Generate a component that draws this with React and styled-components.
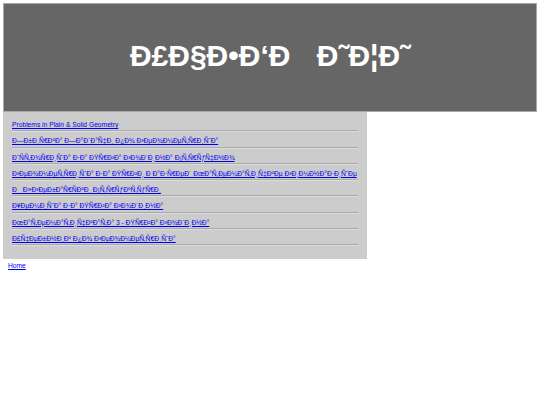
import React from "react";
import styled, { createGlobalStyle } from "styled-components";

const GlobalStyle = createGlobalStyle`
  html, body {
    margin: 0;
    padding: 0;
    background: #ffffff;
  }
  body {
    padding: 3px;
    font-family: "Liberation Sans", Arial, sans-serif;
  }
`;

// UTF-8 text shown as windows-1252, as the page in the picture does
const CP1252 = {
  0x80: 0x20ac, 0x82: 0x201a, 0x83: 0x0192, 0x84: 0x201e, 0x85: 0x2026,
  0x86: 0x2020, 0x87: 0x2021, 0x88: 0x02c6, 0x89: 0x2030, 0x8a: 0x0160,
  0x8b: 0x2039, 0x8c: 0x0152, 0x8e: 0x017d, 0x91: 0x2018, 0x92: 0x2019,
  0x93: 0x201c, 0x94: 0x201d, 0x95: 0x2022, 0x96: 0x2013, 0x97: 0x2014,
  0x98: 0x02dc, 0x99: 0x2122, 0x9a: 0x0161, 0x9b: 0x203a, 0x9c: 0x0153,
  0x9e: 0x017e, 0x9f: 0x0178,
};
const garble = (s) =>
  Array.from(new TextEncoder().encode(s), (b) =>
    b === 0x81 ? "" : String.fromCharCode(CP1252[b] ?? b)
  ).join("");

const Header = styled.div`
  height: 107px;
  box-sizing: content-box;
  background: #666666;
  border: 1px solid #a8a8a8;
  display: flex;
  align-items: center;
  justify-content: center;
`;

const Title = styled.h1`
  margin: 0 0 3px 0;
  color: #ffffff;
  font-family: "Liberation Sans", Arial, sans-serif;
  font-weight: bold;
  font-size: 30px;
  line-height: 1;
  white-space: pre;
`;

const Sidebar = styled.div`
  box-sizing: border-box;
  width: 364px;
  background: #cccccc;
  padding: 3px 9px 14px 9px;
`;

const List = styled.ul`
  list-style: none;
  margin: 0;
  padding: 0;
`;

const Item = styled.li`
  height: 15.3px;
  line-height: 14px;
  border-bottom: 1px solid #a9a9a9;
  box-shadow: 0 1px 0 #dcdcdc;
  white-space: nowrap;
  overflow: hidden;
`;

const Link = styled.a`
  font-family: "Liberation Sans", Arial, sans-serif;
  font-size: 6.7px;
  color: #0000ee;
  text-decoration: underline;
`;

const Footer = styled.div`
  padding: 0 5px;
  line-height: 8px;
`;

const books = [
  { text: "Problems in Plain & Solid Geometry", raw: true },
  { text: "Збирка Задачи по геометрија" },
  { text: "Историја за Прва година Стручно" },
  { text: "геометрија за Први Разред Математичке гимназије" },
  { text: "Алгебарски Структури" },
  { text: "Хемија за Прва година" },
  { text: "Математичката 3 - Прва година" },
  { text: "Учебник по геометрија" },
];

export default function App() {
  return (
    <>
      <GlobalStyle />
      <Header>
        <Title>{garble("УЧЕБН") + " " + garble("ИЦИ")}</Title>
      </Header>
      <Sidebar>
        <List>
          {books.map((b) => (
            <Item key={b.text}>
              <Link href="#">{b.raw ? b.text : garble(b.text)}</Link>
            </Item>
          ))}
        </List>
      </Sidebar>
      <Footer>
        <Link href="#">Home</Link>
      </Footer>
    </>
  );
}
